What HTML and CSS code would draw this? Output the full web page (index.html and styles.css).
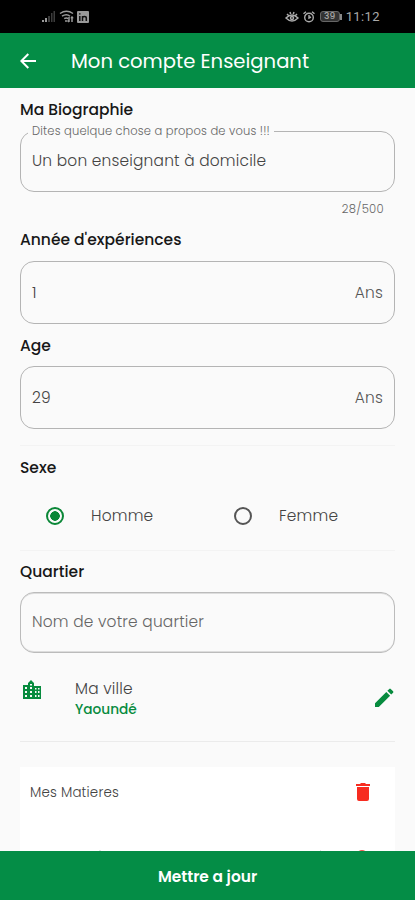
FILE: index.html
```html
<!DOCTYPE html>
<html lang="fr">
<head>
<meta charset="utf-8">
<meta name="viewport" content="width=device-width, initial-scale=1">
<title>Mon compte Enseignant</title>
<link rel="stylesheet" href="styles.css">
</head>
<body>
<div class="screen">
  <div class="status">
    <svg class="signal" width="14" height="13" viewBox="0 0 14 13"><path fill="#999" d="M0 12V10h2v2zM3 12V8h2v4z"/><path fill="#3c3c3c" d="M6 12V6h2v6zM9 12V3h1.500v9zM11.500 12V1H13v11z"/></svg>
    <svg class="wifi" width="15" height="13" viewBox="0 0 15 13"><g fill="none" stroke="#999" stroke-width="1.500"><path d="M1 3.500Q7.500-1 14 3.500M3 6.200q4.500-3 8 0M5.200 8.700q2.200-1.500 4 0"/><path d="M10 7v5m-1.500-1.500L10 12M13 12V7.500m-1 1L13 7l1 1.500"/></g><circle cx="7" cy="11" r="1" fill="#999"/></svg>
    <svg width="12" height="12" viewBox="0 0 12 12"><rect width="12" height="12" rx="1" fill="#999"/><path d="M2.800 5v5M2.800 2.200v1.400M5.500 10V5M5.500 7q0-1.600 1.900-1.600T9.300 7v3" fill="none" stroke="#111" stroke-width="1.500"/></svg>
    <span class="grow"></span>
    <svg class="eye" width="14" height="12" viewBox="0 0 14 12"><g fill="none" stroke="#aaa" stroke-width="1.500"><path d="M1 7q6-6 12 0-6 6-12 0zM2 3l1.500 1.500M5 1l.7 2M9 1l-.7 2M12 3l-1.500 1.500"/><circle cx="7" cy="7" r="1.500"/></g></svg>
    <svg class="alarm" width="12" height="12" viewBox="0 0 12 12"><g fill="none" stroke="#aaa" stroke-width="1.400"><circle cx="6" cy="6.500" r="4.300"/><path d="M.5 2.800L3 .7M11.500 2.800L9 .7M6 4v3l2-1"/></g></svg>
    <span class="battery"><span class="level">39</span><span class="tip"></span></span>
    <span class="clock">11:12</span>
  </div>
  <header class="appbar">
    <svg width="16" height="16" viewBox="0 0 16 16"><path d="M16 8H1.500M8.300 1L1.300 8l7 7" fill="none" stroke="#fff" stroke-width="2"/></svg>
    <h1>Mon compte Enseignant</h1>
  </header>
  <main class="content">
    <h2 class="t-bio">Ma Biographie</h2>
    <div class="field bio">
      <span class="legend">Dites quelque chose a propos de vous !!!</span>
      <span>Un bon enseignant à domicile</span>
    </div>
    <div class="counter">28/500</div>
    <h2 class="t-exp">Année d'expériences</h2>
    <div class="field"><span>1</span><span class="t-ans">Ans</span></div>
    <h2 class="t-age">Age</h2>
    <div class="field"><span>29</span><span class="t-ans">Ans</span></div>
    <section class="sex">
      <h2>Sexe</h2>
      <div class="options">
        <div class="option"><span class="radio on"></span><span>Homme</span></div>
        <div class="option"><span class="radio"></span><span>Femme</span></div>
      </div>
    </section>
    <h2 class="t-quartier">Quartier</h2>
    <div class="field place"><span>Nom de votre quartier</span></div>
    <div class="city">
      <svg class="building" width="20" height="20" viewBox="0 0 20 20"><path fill="#078b3e" d="M1 5h5V3l3-3 3 3v3h7v13H1z"/><path fill="#fafafa" d="M3 7h2v2H3zm0 4h2v2H3zm0 4h2v2H3zM8 4h2v1.500H8zm0 3h2v2H8zm0 4h2v2H8zm0 4h2v2H8zm5-7h1.500v1.500H13zm0 3h1.500v2H13zm0 4h1.500v2H13zm3-7h1.500v1.500H16zm0 3h1.500v2H16zm0 4h1.500v2H16z"/></svg>
      <div class="cityname"><span>Ma ville</span><strong>Yaoundé</strong></div>
      <svg class="pencil" width="20" height="20" viewBox="0 0 20 20"><path fill="#078b3e" d="M1 15.200L12.300 3.900l3.800 3.800L4.800 19H1zM13.400 2.800L15.300.9q.7-.6 1.400 0l2.400 2.400q.6.700 0 1.400l-1.900 1.900z"/></svg>
    </div>
    <section class="card">
      <div class="cardhead">
        <span>Mes Matieres</span>
        <svg width="14" height="18" viewBox="0 0 14 18"><path fill="#f72c20" d="M0 1h4l1-1h4l1 1h4v2H0zM1 4h12v12q0 2-2 2H3q-2 0-2-2z"/></svg>
      </div>
      <svg class="nextrow" width="375" height="10" viewBox="0 0 375 10"><path fill="#555" d="M78 2l2-1.500L82 2v2h-4zM149 1h2v3h-2zM299 2l2-1.500V4h-2z"/><circle cx="342" cy="6" r="6" fill="#f2564c"/></svg>
    </section>
  </main>
  <footer class="submit"><span>Mettre a jour</span></footer>
</div>
</body>
</html>
```
FILE: styles.css
```css
* { box-sizing: border-box; }
body {
  margin: 0;
  background: #fafafa;
  color: #444;
  font-family: Poppins, Inter, "Open Sans", sans-serif;
  font-feature-settings: "cv11", "ss03";
  font-size: 15.4px;
  font-weight: 300;
  line-height: 20px;
  letter-spacing: .2px;
}
svg { display: block; flex: none; }
span, h1, h2, strong { white-space: nowrap; }
.screen { display: flex; flex-direction: column; width: 415px; height: 900px; overflow: hidden; }
.status { display: flex; align-items: center; flex: none; height: 33px; padding: 0 35px 0 42px; background: #000; color: #aaa; }
.wifi { margin: 0 3px 0 3px; }
.grow { flex: 1; }
.alarm { margin: 0 5px 0 4px; }
.battery { display: flex; align-items: center; margin-right: 4px; }
.level { width: 20px; height: 11px; border: 1px solid #666; border-radius: 3px; background: #333; color: #aaa; font-size: 9px; font-weight: 500; line-height: 9px; letter-spacing: 0; text-align: center; }
.tip { width: 2px; height: 6px; background: #888; }
.clock { font-family: Roboto, sans-serif; font-size: 13px; font-weight: 400; letter-spacing: .4px; }
.appbar { display: flex; align-items: center; flex: none; gap: 35px; height: 55px; padding-left: 20px; background: #048d46; color: #fff; }
h1 { margin: 0; font-size: 19.6px; font-weight: 400; line-height: 28px; letter-spacing: 0; }
.content { flex: 1; min-height: 0; padding: 0 20px; overflow: hidden; }
h2 { margin: 0; color: #171717; font-size: 15.5px; font-weight: 500; line-height: 20px; letter-spacing: 0; }
.t-bio { margin-top: 12px; }
.field { display: flex; align-items: center; justify-content: space-between; height: 63px; padding: 1px 11px 0; border: 1px solid #b4b4b4; border-radius: 14px; }
.bio { position: relative; height: 61px; margin-top: 11px; padding: 0 11px 2px; }
.legend { position: absolute; top: -9px; left: 7px; padding: 0 4px; background: #fafafa; color: #666; font-size: 11.5px; line-height: 16px; letter-spacing: .17px; }
.counter { height: 16px; margin: 9px 11px 0 0; color: #666; font-size: 11.6px; line-height: 16px; letter-spacing: .3px; text-align: right; }
.t-exp { margin: 13px 0 11px; }
.t-age { margin: 12px 0 10px; }
.t-ans { color: #555; }
.sex { height: 106px; margin-top: 16px; padding-top: 12px; border-top: 1px solid #f3f3f3; border-bottom: 1px solid #f3f3f3; }
.options { display: grid; grid-template-columns: 188px 1fr; margin-top: 28px; padding-left: 26px; }
.option { display: flex; align-items: center; gap: 27px; }
.radio { width: 18px; height: 18px; border: 2px solid #555; border-radius: 50%; }
.on { border-color: #0a8737; background: radial-gradient(circle, #0a8737 4.5px, transparent 5px); }
.t-quartier { margin: 11px 0 10px; }
.place { height: 61px; padding: 0 11px 2px; border-color: #bbb; color: #666; box-shadow: inset 0 1px #ddd, inset 0 -1px #ddd; }
.city { display: flex; height: 89px; padding: 25px 1px 0 2px; border-bottom: 1px solid #ebebeb; }
.building { margin-top: 2px; }
.cityname { display: flex; flex-direction: column; flex: 1; margin-left: 33px; line-height: 21px; }
strong { color: #078b3e; font-size: 13.7px; font-weight: 500; letter-spacing: 0; }
.pencil { margin-top: 10px; }
.card { height: 100px; margin-top: 25px; background: #fff; font-size: 13.4px; }
.cardhead { display: flex; justify-content: space-between; height: 83px; padding: 16px 25px 0 10px; line-height: 19px; }
.submit { display: flex; align-items: center; justify-content: center; flex: none; height: 49px; padding-top: 2px; background: #048d46; color: #fff; font-size: 15.4px; font-weight: 600; letter-spacing: 0; }
```
